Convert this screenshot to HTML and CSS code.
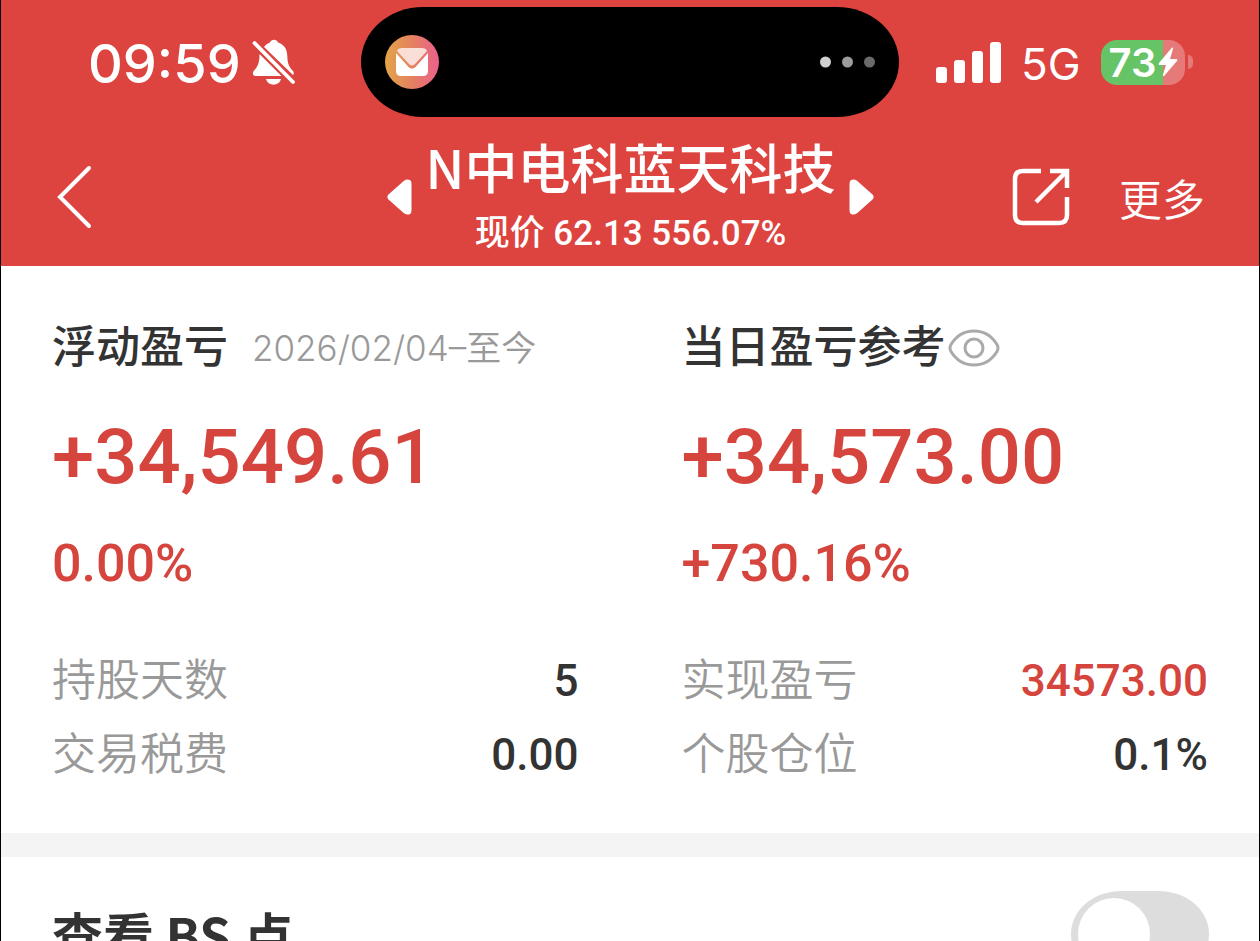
FILE: index.html
```html
<!DOCTYPE html>
<html lang="zh-CN">

<head>
	<meta charset="utf-8">
	<title>N中电科蓝天科技</title>
	<meta name="viewport" content="width=device-width, initial-scale=1">
	<link rel="stylesheet" href="styles.css">
</head>

<body>
	<header class='header'>
		<div class='status'>
			<div class='status__left'>
				<span class='status__time'>09:59</span>
				<svg width='44' height='48' viewBox='0 0 44 48' fill='#fff'>
					<path d='M12 8 C14 5.500 16 4.500 18 3.600 C19 -.2 25 -.2 26 3.600 C32 5.500 35 10 35.300 17 C35.600 25 37 28 41 32 C42 33.500 42 35 41 36 Z' />
					<path d='M7.500 15 L29.500 37 L3 37 C0 36.500 .5 33 2.500 31 C6.500 27 7.500 22 7.500 15 Z' />
					<path d='M14 40 H29 C27 47.500 16 47.500 14 40 Z' />
					<path d='M2.500 4 L41 43' fill='none' stroke='#dd4440' stroke-width='7' />
					<path d='M2.500 4 L41 43' fill='none' stroke='#fff' stroke-width='3.800' stroke-linecap='round' />
				</svg>
			</div>
			<div class='island'>
				<svg width='54' height='54' viewBox='0 0 54 54'>
					<defs>
						<linearGradient id='mail'>
							<stop offset='0' stop-color='#e2a548' />
							<stop offset='.5' stop-color='#e58160' />
							<stop offset='1' stop-color='#ea608c' />
						</linearGradient>
					</defs>
					<circle cx='27' cy='27' r='27' fill='url(#mail)' />
					<path d='M11 18 L23.500 32 Q27 35 30.500 32 L43 18 V36 Q43 41 38 41 H16 Q11 41 11 36 Z' fill='#fff' />
					<path d='M12 16 Q13 13 17 13 H37 Q41 13 42 16 L30 29 Q27 32 24 29 Z' fill='#fadfd8' />
				</svg>
				<svg width='55' height='12' viewBox='0 0 55 12'>
					<circle cx='5.500' cy='6' r='5.500' fill='#d0d0d0' />
					<circle cx='27.500' cy='6' r='5.500' fill='#9c9c9c' />
					<circle cx='49.500' cy='6' r='5.500' fill='#6a6a6a' />
				</svg>
			</div>
			<div class='status__right'>
				<svg width='65' height='41' viewBox='0 0 65 41' fill='#fff'>
					<rect x='0' y='25' width='11' height='16' rx='3' />
					<rect x='18' y='18' width='11' height='23' rx='3' />
					<rect x='36' y='9' width='11' height='32' rx='3' />
					<rect x='54' y='0' width='11' height='41' rx='3' />
				</svg>
				<span class='status__net'>5G</span>
				<div class='battery'>
					<div class='battery__body'>
						<span>73</span>
						<svg width='20' height='30' viewBox='0 0 20 30' fill='#fff'>
							<path d='M14 .5 Q15.500 0 15 2 L12 12 H18.500 Q20 12.500 19 14 L6.500 28.500 Q4.500 30 5 27.500 L8 18 H1.500 Q0 17.500 1 16 Z' />
						</svg>
					</div>
					<div class='battery__nub'></div>
				</div>
			</div>
		</div>

		<nav class='nav'>
			<button class='nav__back' aria-label='返回'>
				<svg width='36' height='64' viewBox='0 0 36 64' fill='none' stroke='#fff' stroke-width='4'>
					<path d='M33 3 L4 32 L33 61' stroke-linecap='round' />
				</svg>
			</button>
			<div class='nav__center'>
				<button aria-label='上一只'>
					<svg width='25' height='36' viewBox='0 0 25 36' fill='#fff'>
						<path d='M1.500 15.500 L17 1.800 Q20 -.5 23 1 Q24.500 2 24.500 5 V31 Q24.500 34 23 35 Q20 36.500 17 34.200 L1.500 20.500 Q-.8 18 1.500 15.500 Z' />
					</svg>
				</button>
				<div class='nav__stock'>
					<h1 class='nav__title'>N中电科蓝天科技</h1>
					<p class='nav__price'>现价 62.13 556.07%</p>
				</div>
				<button aria-label='下一只'>
					<svg width='25' height='36' viewBox='0 0 25 36' fill='#fff'>
						<path d='M23.500 15.500 L8 1.800 Q5 -.5 2 1 Q.5 2 .5 5 V31 Q.5 34 2 35 Q5 36.500 8 34.200 L23.500 20.500 Q25.800 18 23.500 15.500 Z' />
					</svg>
				</button>
			</div>
			<div class='nav__actions'>
				<button aria-label='分享'>
					<svg width='58' height='58' viewBox='0 0 58 58' fill='none' stroke='#fff' stroke-width='4.500'>
						<path d='M29 3 H11 Q3 3 3 11 V47 Q3 55 11 55 H47 Q55 55 55 47 V29' />
						<path d='M38 3 H55 V20 M54 4 L24 34' />
					</svg>
				</button>
				<button class='nav__more'>更多</button>
			</div>
		</nav>
	</header>

	<main>
		<section class='summary'>
			<div class='col'>
				<h2 class='col__hed'>浮动盈亏 <span class='col__date'>2026/02/04–至今</span></h2>
				<p class='col__amount'>+34,549.61</p>
				<p class='col__rate'>0.00%</p>
				<dl class='stats'>
					<dt>持股天数</dt>
					<dd>5</dd>
					<dt>交易税费</dt>
					<dd>0.00</dd>
				</dl>
			</div>
			<div class='col'>
				<h2 class='col__hed'>当日盈亏参考
					<button class='col__eye' aria-label='隐藏金额'>
						<svg width='52' height='38' viewBox='0 0 52 38' fill='none' stroke='#aaa' stroke-width='3'>
							<path d='M3 15.500 C14 -2.500 38 -2.500 49 15.500 Q51 19 49 22.500 C38 40.500 14 40.500 3 22.500 Q1 19 3 15.500 Z' />
							<circle cx='26' cy='19' r='9' />
						</svg>
					</button>
				</h2>
				<p class='col__amount'>+34,573.00</p>
				<p class='col__rate'>+730.16%</p>
				<dl class='stats'>
					<dt>实现盈亏</dt>
					<dd class='up'>34573.00</dd>
					<dt>个股仓位</dt>
					<dd>0.1%</dd>
				</dl>
			</div>
		</section>

		<section class='points'>
			<label class='points__label' for='bs'>查看 BS 点</label>
			<input class='switch' type='checkbox' role='switch' id='bs'>
		</section>
	</main>
</body>

</html>
```
FILE: styles.css
```css
* {
	box-sizing: border-box;
}

body {
	margin: 0;
	height: 100vh;
	overflow: hidden;
	border: solid #000;
	border-width: 0 1px;
	font-family: Roboto, 'Noto Sans CJK SC', sans-serif;
	color: #333;
	background: #fff;
}

h1,
h2,
p,
dl,
dd {
	margin: 0;
}

button {
	padding: 0;
	border: 0;
	background: none;
	color: inherit;
	font: inherit;
}

svg {
	display: block;
	flex: none;
}

/* header */

.header {
	height: 266px;
	padding-top: 7px;
	color: #fff;
	background: #dd4440;
}

.status {
	display: grid;
	grid-template-columns: 1fr 538px 1fr;
	height: 110px;
	font-family: Inter, sans-serif;
}

.status__left,
.status__right,
.island,
.battery,
.battery__body {
	display: flex;
	align-items: center;
}

.status__left {
	gap: 11px;
	padding-top: 2px;
	padding-left: 87px;
}

.status__time {
	font-size: 54px;
	font-weight: 500;
}

.island {
	justify-content: space-between;
	padding: 0 24px;
	border-radius: 62px / 55px;
	background: #000;
}

.status__right {
	gap: 20px;
	padding-left: 37px;
}

.status__net {
	padding-top: 4px;
	font-size: 44px;
}

.battery {
	gap: 3px;
}

.battery__body {
	gap: 2px;
	width: 84px;
	height: 45px;
	padding-left: 8px;
	border-radius: 16px;
	background: linear-gradient(to right, #66c466 62px, #e67a78 62px);
	font-size: 40px;
	font-weight: 600;
}

.battery__nub {
	width: 5px;
	height: 14px;
	border-radius: 0 5px 5px 0;
	background: #e67a78;
}

.nav {
	display: grid;
	grid-template-columns: 1fr auto 1fr;
	align-items: center;
	height: 149px;
	padding: 10px 54px 0 55px;
}

.nav__back {
	justify-self: start;
}

.nav__center {
	display: flex;
	align-items: center;
	gap: 14px;
}

.nav__stock {
	text-align: center;
}

.nav__title {
	font: 500 53px/64px 'Noto Sans CJK SC', sans-serif;
}

.nav__price {
	margin-top: 11px;
	font-size: 35px;
	font-weight: 500;
	line-height: 50px;
}

.nav__actions {
	display: flex;
	align-items: center;
	justify-self: end;
	gap: 49px;
}

.nav__more {
	font-size: 43px;
	font-weight: 350;
}

/* profit summary */

.summary {
	display: grid;
	grid-template-columns: 1fr 1fr;
	gap: 103px;
	padding: 52px 51px 41px;
	border-bottom: 24px solid #f4f4f4;
}

.col__hed {
	display: flex;
	align-items: center;
	height: 60px;
	font-size: 44px;
	font-weight: 500;
	line-height: 60px;
	white-space: nowrap;
}

.col__date {
	margin-left: 24px;
	font-family: Inter, 'Noto Sans CJK SC', sans-serif;
	font-size: 35px;
	font-weight: 350;
	color: #999;
}

.col__eye {
	margin-left: 2px;
}

.col__amount,
.col__rate,
.up {
	color: #d6453d;
}

.col__amount {
	margin-top: 29px;
	font-size: 76px;
	font-weight: 500;
	line-height: 100px;
}

.col__rate {
	margin-top: 24px;
	font-size: 52px;
	font-weight: 500;
	line-height: 66px;
}

.stats {
	display: grid;
	grid-template-columns: auto auto;
	justify-content: space-between;
	margin-top: 47px;
	font-size: 44px;
	line-height: 74px;
}

.stats dt {
	font-weight: 350;
	color: #999;
}

.stats dd {
	font-weight: 500;
	text-align: right;
}

/* buy / sell points */

.points {
	display: flex;
	align-items: center;
	justify-content: space-between;
	padding: 34px 50px 34px 51px;
}

.points__label {
	font: 700 51px/82px 'Noto Sans CJK SC', sans-serif;
}

.switch {
	appearance: none;
	display: flex;
	align-items: center;
	width: 138px;
	height: 86px;
	margin: 0;
	padding: 0 7px;
	border-radius: 50px / 43px;
	background: #ddd;
}

.switch::before {
	content: '';
	width: 72px;
	height: 72px;
	border-radius: 50%;
	background: #fff;
}

.switch:checked {
	justify-content: flex-end;
	background: #dd4440;
}
```
